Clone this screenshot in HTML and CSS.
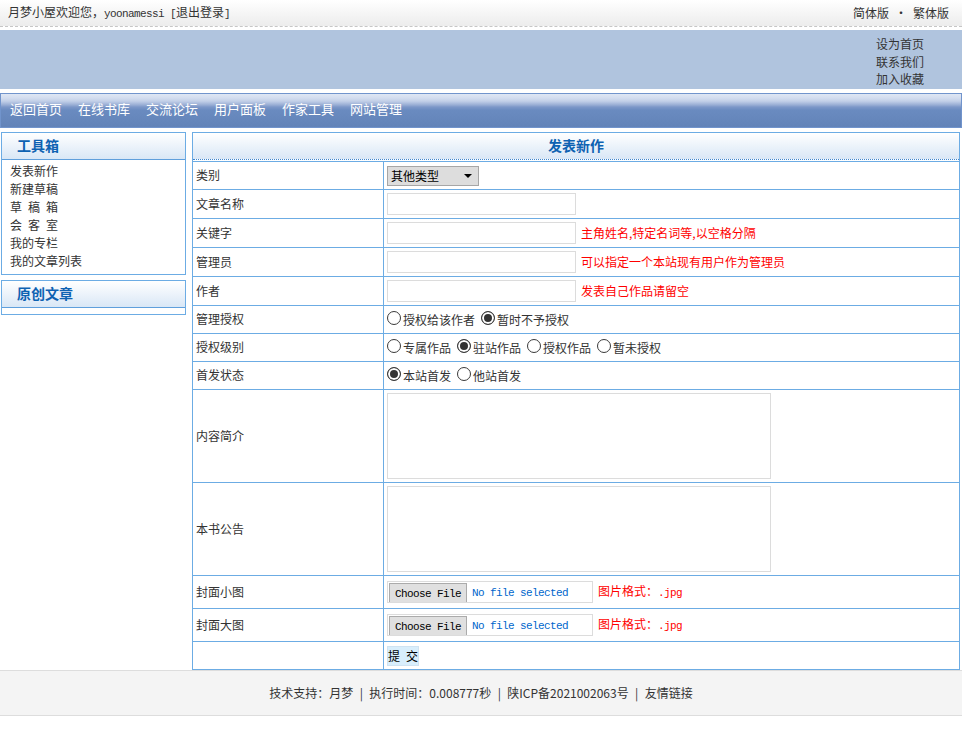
FILE: index.html
```html
<!DOCTYPE html>
<html lang="zh-CN">
<head>
<meta charset="utf-8">
<title>发表新作 - 月梦小屋</title>
<link rel="stylesheet" href="styles.css">
</head>
<body>
<header class="topbar">
  <div class="welcome">月梦小屋欢迎您，<span class="mono">yoonamessi [</span>退出登录<span class="mono">]</span></div>
  <div class="lang"><a>简体版</a><span class="dot">·</span><a>繁体版</a></div>
</header>
<div class="banner">
  <ul class="quick"><li>设为首页</li><li>联系我们</li><li>加入收藏</li></ul>
</div>
<nav class="nav">
  <a>返回首页</a><a>在线书库</a><a>交流论坛</a><a>用户面板</a><a>作家工具</a><a>网站管理</a>
</nav>
<div class="layout">
  <aside class="side">
    <div class="box">
      <h3 class="box-head">工具箱</h3>
      <ul class="box-list">
        <li>发表新作</li>
        <li>新建草稿</li>
        <li>草&ensp;稿&ensp;箱</li>
        <li>会&ensp;客&ensp;室</li>
        <li>我的专栏</li>
        <li>我的文章列表</li>
      </ul>
    </div>
    <div class="box">
      <h3 class="box-head">原创文章</h3>
      <div class="box-body"></div>
    </div>
  </aside>
  <section class="panel">
    <h2 class="panel-head">发表新作</h2>
    <form class="form">
      <div class="frow h28">
        <div class="lab">类别</div>
        <div class="val"><span class="sel"><select><option>其他类型</option></select></span></div>
      </div>
      <div class="frow h29">
        <div class="lab">文章名称</div>
        <div class="val"><input class="txt" type="text"></div>
      </div>
      <div class="frow h29">
        <div class="lab">关键字</div>
        <div class="val"><input class="txt" type="text"><span class="hint">主角姓名,特定名词等,以空格分隔</span></div>
      </div>
      <div class="frow h29">
        <div class="lab">管理员</div>
        <div class="val"><input class="txt" type="text"><span class="hint">可以指定一个本站现有用户作为管理员</span></div>
      </div>
      <div class="frow h29">
        <div class="lab">作者</div>
        <div class="val"><input class="txt" type="text"><span class="hint">发表自己作品请留空</span></div>
      </div>
      <div class="frow h28">
        <div class="lab">管理授权</div>
        <div class="val">
          <label class="rad"><input type="radio" name="auth">授权给该作者</label>
          <label class="rad"><input type="radio" name="auth" checked>暂时不予授权</label>
        </div>
      </div>
      <div class="frow h28">
        <div class="lab">授权级别</div>
        <div class="val">
          <label class="rad"><input type="radio" name="level">专属作品</label>
          <label class="rad"><input type="radio" name="level" checked>驻站作品</label>
          <label class="rad"><input type="radio" name="level">授权作品</label>
          <label class="rad"><input type="radio" name="level">暂未授权</label>
        </div>
      </div>
      <div class="frow h28">
        <div class="lab">首发状态</div>
        <div class="val">
          <label class="rad"><input type="radio" name="first" checked>本站首发</label>
          <label class="rad"><input type="radio" name="first">他站首发</label>
        </div>
      </div>
      <div class="frow h93">
        <div class="lab">内容简介</div>
        <div class="val"><textarea class="ta"></textarea></div>
      </div>
      <div class="frow h93">
        <div class="lab">本书公告</div>
        <div class="val"><textarea class="ta"></textarea></div>
      </div>
      <div class="frow h33">
        <div class="lab">封面小图</div>
        <div class="val">
          <label class="file"><span class="fbtn">Choose File</span><span class="fname">No file selected</span></label>
          <span class="hint">图片格式：<span class="mono">.jpg</span></span>
        </div>
      </div>
      <div class="frow h33">
        <div class="lab">封面大图</div>
        <div class="val">
          <label class="file"><span class="fbtn">Choose File</span><span class="fname">No file selected</span></label>
          <span class="hint">图片格式：<span class="mono">.jpg</span></span>
        </div>
      </div>
      <div class="frow h28">
        <div class="lab"></div>
        <div class="val"><button class="submit" type="button">提&ensp;交</button></div>
      </div>
    </form>
  </section>
</div>
<footer class="footer">
  技术支持：月梦<span class="sep">|</span>执行时间：0.008777秒<span class="sep">|</span>陕ICP备2021002063号<span class="sep">|</span>友情链接
</footer>
</body>
</html>
```
FILE: styles.css
```css
* { box-sizing: border-box; }

body {
  margin: 0;
  font: 12px/18px "Noto Sans CJK SC", "Liberation Sans", sans-serif;
  color: #333;
  background: #fff;
}

.mono {
  font-family: "Liberation Mono", monospace;
  font-size: 11px;
  letter-spacing: -0.6px;
}

/* top bar */
.topbar {
  display: flex;
  justify-content: space-between;
  align-items: center;
  height: 27px;
  padding: 0 13px 0 8px;
  background: linear-gradient(#ffffff, #ececec);
  border-bottom: 1px dashed #c6c6c6;
}
.lang a { color: #333; }
.lang .dot {
  display: inline-block;
  width: 24px;
  text-align: center;
}

/* banner */
.banner {
  margin-top: 3px;
  height: 59px;
  background: #b0c4de;
  display: flex;
  justify-content: flex-end;
  padding: 5px 38px 0 0;
}
.quick {
  list-style: none;
  margin: 0;
  padding: 0;
  line-height: 17.5px;
}

/* nav */
.nav {
  margin-top: 4px;
  height: 35px;
  border: 1px solid #7194cc;
  background: linear-gradient(to bottom,
    #dfe7f4 0px, #d3ddef 4px, #c3d0e8 7px, #aebfdf 9px,
    #98add4 11px, #7c97c8 13px, #6a8bc0 16px, #6283b8 100%);
  display: flex;
  align-items: center;
  gap: 16px;
  padding: 0 0 3px 9px;
  font-size: 13px;
}
.nav a { color: #fff; }

/* layout */
.layout {
  display: flex;
  align-items: flex-start;
  gap: 6px;
  padding: 4px 2px 0 1px;
}

.side { width: 185px; flex: none; }

.box {
  border: 1px solid #6cace4;
  background: #fff;
}
.box + .box { margin-top: 5px; }
.box-head {
  margin: 0;
  height: 27px;
  padding-left: 15px;
  background: linear-gradient(#ffffff, #d9e7f6);
  border-bottom: 1px solid #5f9fdc;
  font-size: 14px;
  font-weight: bold;
  line-height: 25px;
  color: #0e62b2;
}
.box-list {
  list-style: none;
  margin: 0;
  padding: 2px 0 4px 8px;
  line-height: 18px;
}
.box-body { height: 6px; }

/* panel */
.panel {
  width: 768px;
  flex: none;
  border: 1px solid #6cace4;
}
.panel-head {
  margin: 0 0 1px;
  height: 27px;
  background: linear-gradient(#ffffff, #d9e7f6);
  border-bottom: 1px dotted #3f86cf;
  text-align: center;
  font-size: 14px;
  font-weight: bold;
  line-height: 25px;
  color: #0e62b2;
}

.form { margin: 0; }

.frow {
  display: flex;
  border-top: 1px solid #6cace4;
}
.h28 { height: 28px; }
.h29 { height: 29px; }
.h33 { height: 33px; }
.h93 { height: 93px; }

.lab {
  width: 191px;
  flex: none;
  border-right: 1px solid #6cace4;
  padding: 0 0 1px 3px;
  display: flex;
  align-items: center;
}
.val {
  flex: 1;
  padding-left: 3px;
  display: flex;
  align-items: center;
}

.txt {
  width: 189px;
  height: 22px;
  margin: 0;
  border: 1px solid #dcdcdc;
  padding: 0 3px;
  font: inherit;
}

.hint {
  color: #ff0000;
  margin-left: 5px;
  padding-bottom: 1px;
}

.sel {
  position: relative;
  display: inline-block;
  height: 20px;
}
.sel select {
  appearance: none;
  -webkit-appearance: none;
  width: 92px;
  height: 20px;
  margin: 0;
  padding: 0 0 0 3px;
  border: 1px solid #a6a6a6;
  border-radius: 0;
  background: #dddddd;
  font: 12px/18px "Noto Sans CJK SC", sans-serif;
  color: #000;
}
.sel::after {
  content: "";
  position: absolute;
  right: 7px;
  top: 8px;
  border-style: solid;
  border-width: 4px 4px 0;
  border-color: #000 transparent transparent;
}

.rad {
  display: inline-flex;
  align-items: center;
  margin-right: 6px;
  color: #333;
}
.rad input {
  appearance: none;
  -webkit-appearance: none;
  width: 14px;
  height: 14px;
  margin: 0 2px 3px 0;
  border: 1px solid #3a3a3a;
  border-radius: 50%;
  background: #fff;
}
.rad input:checked {
  background: #333;
  box-shadow: inset 0 0 0 2px #fff;
}

.ta {
  width: 384px;
  height: 86px;
  margin: 0;
  border: 1px solid #dcdcdc;
  resize: none;
  font: inherit;
}

.file {
  display: inline-flex;
  align-items: stretch;
  width: 206px;
  height: 22px;
  border: 1px solid #dcdcdc;
  padding: 1px 0 0 1px;
  overflow: hidden;
  font-family: "Liberation Mono", monospace;
  font-size: 11px;
  letter-spacing: -0.6px;
}
.fbtn {
  width: 78px;
  height: 21px;
  display: flex;
  align-items: center;
  justify-content: center;
  background: #e0e0e0;
  border: 1px solid #ababab;
  border-bottom: 0;
  color: #000;
}
.fname {
  margin-left: 5px;
  display: flex;
  align-items: center;
  color: #0066cc;
}

.submit {
  width: 32px;
  height: 20px;
  margin: 0;
  padding: 0;
  border: 1px solid #cfe3f2;
  background: #d8eefc;
  font: 12px/18px "Noto Sans CJK SC", sans-serif;
  color: #000;
}

/* footer */
.footer {
  height: 46px;
  background: #f4f4f4;
  border-top: 1px solid #dddddd;
  border-bottom: 1px solid #dddddd;
  display: flex;
  justify-content: center;
  align-items: center;
  color: #333;
}
.footer .sep {
  display: inline-block;
  width: 16px;
  text-align: center;
}
```
